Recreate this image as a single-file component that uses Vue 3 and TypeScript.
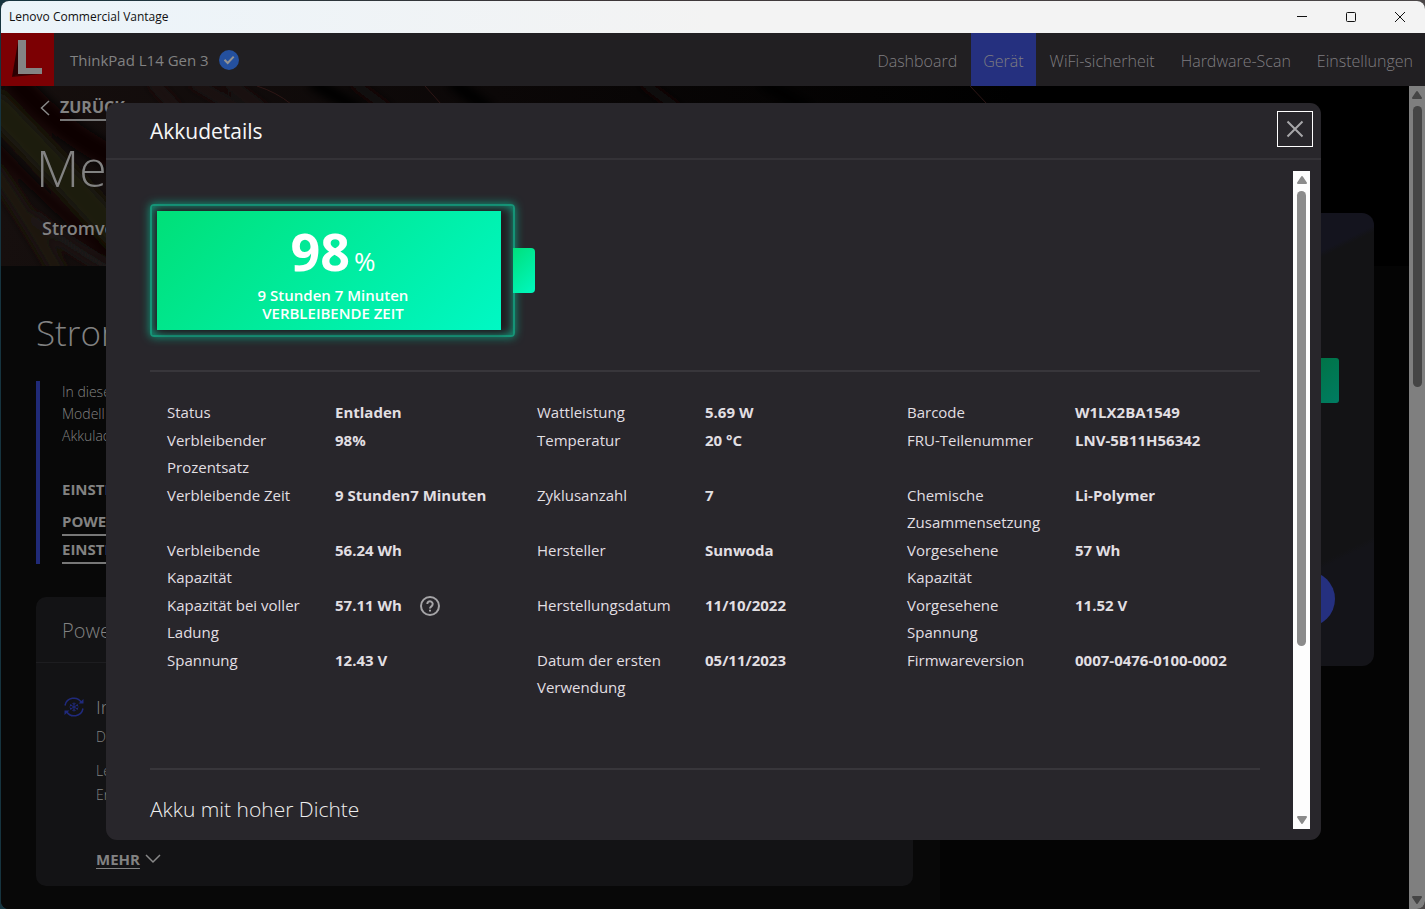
<script setup lang="ts">
interface NavItem {
  label: string
  active?: boolean
}

interface Detail {
  label: string
  value: string
  help?: boolean
}

const nav: NavItem[] = [
  { label: 'Dashboard' },
  { label: 'Gerät', active: true },
  { label: 'WiFi-sicherheit' },
  { label: 'Hardware-Scan' },
  { label: 'Einstellungen' },
]

const details: Detail[] = [
  { label: 'Status', value: 'Entladen' },
  { label: 'Wattleistung', value: '5.69 W' },
  { label: 'Barcode', value: 'W1LX2BA1549' },
  { label: 'Verbleibender Prozentsatz', value: '98%' },
  { label: 'Temperatur', value: '20 °C' },
  { label: 'FRU-Teilenummer', value: 'LNV-5B11H56342' },
  { label: 'Verbleibende Zeit', value: '9 Stunden7 Minuten' },
  { label: 'Zyklusanzahl', value: '7' },
  { label: 'Chemische Zusammensetzung', value: 'Li-Polymer' },
  { label: 'Verbleibende Kapazität', value: '56.24 Wh' },
  { label: 'Hersteller', value: 'Sunwoda' },
  { label: 'Vorgesehene Kapazität', value: '57 Wh' },
  { label: 'Kapazität bei voller Ladung', value: '57.11 Wh', help: true },
  { label: 'Herstellungsdatum', value: '11/10/2022' },
  { label: 'Vorgesehene Spannung', value: '11.52 V' },
  { label: 'Spannung', value: '12.43 V' },
  { label: 'Datum der ersten Verwendung', value: '05/11/2023' },
  { label: 'Firmwareversion', value: '0007-0476-0100-0002' },
]
</script>

<template>
  <div class="desktop">
    <div class="window">
      <div class="titlebar">
        <span class="app-name">Lenovo Commercial Vantage</span>
        <div class="caption">
          <button type="button" aria-label="Minimieren">
            <svg width="12" height="12" viewBox="0 0 12 12"><path d="M1 5.5h10" /></svg>
          </button>
          <button type="button" aria-label="Maximieren">
            <svg width="12" height="12" viewBox="0 0 12 12"><rect x="1.5" y="1.5" width="9" height="9" rx="1" /></svg>
          </button>
          <button type="button" aria-label="Fenster schließen">
            <svg width="12" height="12" viewBox="0 0 12 12"><path d="M1 1l10 10M11 1L1 11" /></svg>
          </button>
        </div>
      </div>

      <header class="topbar">
        <svg class="logo" width="53" height="53" viewBox="0 0 53 53" aria-hidden="true">
          <rect width="53" height="53" fill="#7c0003" />
          <path d="M17 9L11 44l8-3z" fill="#2c0002" />
          <path d="M11 44l8-4h20l1 1z" fill="#3a0002" />
          <path d="M17 7h8v28h16v6H17z" fill="#848484" />
        </svg>
        <span class="device">ThinkPad L14 Gen 3</span>
        <svg class="verified" width="20" height="20" viewBox="0 0 20 20" aria-hidden="true">
          <circle cx="10" cy="10" r="10" fill="#24509e" />
          <path d="M5.5 9.8l3.2 3.2 6-6.4" fill="none" stroke="#929292" stroke-width="2" />
        </svg>
        <nav>
          <a v-for="item in nav" :key="item.label" href="#" :class="{ active: item.active }">{{ item.label }}</a>
        </nav>
      </header>

      <div class="viewport">
        <main class="page">
          <svg class="hero" viewBox="0 0 1408 180" preserveAspectRatio="xMinYMin slice" aria-hidden="true">
            <defs>
              <linearGradient id="fade" x1="0" x2="1" y1="0" y2="0">
                <stop offset="0" stop-color="#160f0e" />
                <stop offset="0.35" stop-color="#0b0707" />
                <stop offset="0.72" stop-color="#000" />
              </linearGradient>
              <filter id="soft"><feGaussianBlur stdDeviation="5" /></filter>
            </defs>
            <rect width="1408" height="180" fill="url(#fade)" />
            <g filter="url(#soft)" fill="none">
              <path d="M-10 15Q50 75 130 165" stroke="#1b1c0d" stroke-width="28" />
              <path d="M10 -10Q60 50 130 80" stroke="#070404" stroke-width="24" />
              <path d="M-10 80Q20 120 60 190" stroke="#1a1211" stroke-width="16" />
              <path d="M-10 55Q40 110 110 170" stroke="#080505" stroke-width="10" />
              <path d="M30 130Q60 155 120 190" stroke="#1f1413" stroke-width="12" />
              <path d="M150 -5l28 30M190 -5l50 30M225 -5l40 30" stroke="#241616" stroke-width="7" />
              <path d="M350 -5l40 30M640 -5l40 30" stroke="#140c0c" stroke-width="8" />
              <path d="M310 -5l50 30M450 -5l40 30M760 -5l50 30" stroke="#040303" stroke-width="14" />
            </g>
            <path d="M256 0Q275 6 290 18M424 0l16 18M969 0l17 18" fill="none" stroke="#2e1716" stroke-width="1" />
          </svg>

          <a class="back" href="#">
            <svg width="10" height="16" viewBox="0 0 10 16" aria-hidden="true"><path d="M9 1L1.500 8 9 15" /></svg>
            <span>ZURÜCK</span>
          </a>
          <h1>Mein Gerät</h1>
          <p class="tab">Stromversorgung</p>

          <div class="columns">
            <section class="left">
              <h2>Stromversorgung</h2>
              <div class="intro">
                <p>In diesem<br />Modell<br />Akkulade</p>
                <strong>EINSTELL</strong>
                <a href="#">POWER</a>
                <a href="#">EINSTELL</a>
              </div>
              <article class="card">
                <h3>Power</h3>
                <div class="feature">
                  <svg width="22" height="20" viewBox="0 0 22 20" aria-hidden="true">
                    <path d="M2 8.500a9 9 0 0 1 16.500-3M20 11.500a9 9 0 0 1-16.500 3" />
                    <path d="M20.500 2v4.500h-5zM1.500 18v-4.500h5z" class="solid" />
                    <path class="flake" d="M11 5.500v9M7 7.700l8 4.600M15 7.700l-8 4.600M9.500 6L11 7.500 12.500 6M9.500 14L11 12.500l1.500 1.500M7 9.500l1-2M14 12.500l1-2M7 10.500l1 2M14 7.500l1 2" />
                  </svg>
                  <div>
                    <h4>Intelligent</h4>
                    <p>Diese</p>
                    <p class="note">Leistung<br />Energie</p>
                  </div>
                </div>
                <button type="button" class="more">
                  <span>MEHR</span>
                  <svg width="16" height="10" viewBox="0 0 16 10" aria-hidden="true"><path d="M1 1l7 7 7-7" /></svg>
                </button>
              </article>
            </section>
            <aside class="status-card">
              <span class="battery-tip"></span>
              <span class="orb"></span>
            </aside>
          </div>
        </main>

        <div class="track outer" aria-hidden="true">
          <svg width="12" height="10" viewBox="0 0 12 10"><path d="M6 2l4 6H2z" /></svg>
          <span class="thumb"></span>
          <svg width="12" height="10" viewBox="0 0 12 10"><path d="M6 8L2 2h8z" /></svg>
        </div>
      </div>

      <section class="modal" role="dialog" aria-labelledby="dialog-title">
        <div class="modal-head">
          <h2 id="dialog-title">Akkudetails</h2>
          <button type="button" class="close" aria-label="Schließen">
            <svg width="18" height="18" viewBox="0 0 18 18"><path d="M1.500 1.500l15 15M16.500 1.500l-15 15" /></svg>
          </button>
        </div>
        <div class="modal-body">
          <div class="scroll-area">
            <div class="battery">
              <div class="shell">
                <div class="charge">
                  <div class="percent"><b>98</b><span>%</span></div>
                  <span>9 Stunden 7 Minuten</span>
                  <span>VERBLEIBENDE ZEIT</span>
                </div>
              </div>
              <div class="terminal"></div>
            </div>

            <dl class="details">
              <div v-for="d in details" :key="d.label" class="detail">
                <dt>{{ d.label }}</dt>
                <dd>
                  {{ d.value }}
                  <button v-if="d.help" type="button" class="help" aria-label="Hilfe">
                    <svg width="20" height="20" viewBox="0 0 20 20">
                      <circle cx="10" cy="10" r="9" />
                      <path d="M7.300 8a2.700 2.700 0 1 1 4.400 2.100c-1 .8-1.700 1.200-1.700 2.400M10 13.800v1.700" />
                    </svg>
                  </button>
                </dd>
              </div>
            </dl>

            <h3 class="density">Akku mit hoher Dichte</h3>
          </div>
          <div class="track inner" aria-hidden="true">
            <svg width="12" height="10" viewBox="0 0 12 10"><path d="M6 2l4 6H2z" /></svg>
            <span class="thumb"></span>
            <svg width="12" height="10" viewBox="0 0 12 10"><path d="M6 8L2 2h8z" /></svg>
          </div>
        </div>
      </section>
    </div>
  </div>
</template>

<style>
html,
body,
#app {
  height: 100%;
}

body {
  overflow: hidden;
}
</style>

<style scoped>
* {
  box-sizing: border-box;
}

h1,
h2,
h3,
h4,
p,
dl,
dd {
  margin: 0;
}

button {
  padding: 0;
  border: 0;
  background: none;
  color: inherit;
  font: inherit;
}

a {
  color: inherit;
  text-decoration: none;
}

svg {
  flex: none;
}

.desktop {
  height: 100%;
  padding: 1px 0 0 1px;
  background: linear-gradient(90deg, #16343f, #3d3638 40%, #4b4748);
  font-family: "Open Sans", "Noto Sans", sans-serif;
}

.window {
  position: relative;
  display: flex;
  flex-direction: column;
  height: 100%;
  overflow: hidden;
  border-radius: 8px;
  background: #080808;
}

.titlebar {
  display: flex;
  flex: none;
  justify-content: space-between;
  height: 32px;
  padding-left: 8px;
  background: linear-gradient(90deg, #ebf4fa, #f3f3f3 50%);
  color: #111;
  font-size: 12px;
  line-height: 32px;
}

.caption {
  display: flex;
  padding-right: 1px;
}

.caption button {
  display: grid;
  place-items: center;
  width: 49px;
}

.caption svg {
  fill: none;
  stroke: #111;
}

.topbar {
  display: flex;
  flex: none;
  align-items: center;
  height: 53px;
  background: #211f22;
  color: #828282;
}

.device {
  margin: 0 10px 0 16px;
  font-size: 15px;
}

.topbar nav {
  display: flex;
  gap: 2px;
  height: 100%;
  margin-left: auto;
}

.topbar nav a {
  padding: 0 12px;
  color: #7f7d80;
  font-size: 16px;
  font-weight: 300;
  line-height: 56px;
}

.topbar nav a.active {
  background: #25307f;
}

.viewport {
  display: flex;
  flex: 1;
  min-height: 0;
}

.page {
  position: relative;
  flex: 1;
  min-width: 0;
  overflow: hidden;
  padding: 9px 35px 0;
  background: linear-gradient(90deg, #080808 939px, #040404 939px);
  color: #828282;
  white-space: nowrap;
}

.hero {
  position: absolute;
  top: 0;
  left: 0;
  width: 100%;
  height: 180px;
}

.back,
.page h1,
.tab,
.columns {
  position: relative;
}

.back {
  display: flex;
  align-items: center;
  gap: 10px;
  width: max-content;
  padding-left: 4px;
  font-size: 16px;
  font-weight: 700;
  line-height: 24px;
}

.back span {
  border-bottom: 2px solid #777;
}

.back svg,
.more svg {
  fill: none;
  stroke: #888;
  stroke-width: 1.5;
}

.page h1 {
  margin-top: 11px;
  font-size: 50px;
  font-weight: 300;
  line-height: 72px;
}

.tab {
  margin-top: 10px;
  padding-left: 6px;
  font-size: 18px;
  font-weight: 600;
  line-height: 28px;
}

.columns {
  display: flex;
  justify-content: space-between;
}

.left {
  width: 877px;
  padding-top: 64px;
}

.left h2 {
  font-size: 35px;
  font-weight: 300;
  line-height: 54px;
}

.intro {
  display: flex;
  flex-direction: column;
  align-items: flex-start;
  margin-top: 21px;
  padding-left: 22px;
  border-left: 4px solid #202a78;
  font-size: 15px;
  line-height: 22px;
}

.intro p {
  margin-bottom: 31px;
  font-size: 14px;
  font-weight: 300;
}

.intro strong,
.intro a {
  font-weight: 700;
}

.intro strong {
  margin-bottom: 8px;
}

.intro a {
  margin-top: 2px;
  padding-bottom: 2px;
  border-bottom: 2px solid #777;
}

.card {
  height: 289px;
  margin-top: 33px;
  border-radius: 10px;
  background: #131315;
}

.card h3 {
  height: 66px;
  padding-left: 26px;
  border-bottom: 1px solid #1d1d20;
  font-size: 20px;
  font-weight: 300;
  line-height: 68px;
}

.feature {
  display: flex;
  gap: 11px;
  padding: 30px 0 0 27px;
}

.feature svg {
  margin-top: 4px;
  fill: none;
  stroke: #202a7c;
  stroke-width: 1.5;
}

.feature .flake {
  stroke-width: 1;
}

.feature .solid {
  fill: #202a7c;
  stroke: none;
}

.feature h4 {
  font-size: 19px;
  font-weight: 300;
  line-height: 28px;
}

.feature p {
  margin-top: 4px;
  font-size: 14px;
  font-weight: 300;
  line-height: 24px;
}

.feature .note {
  margin-top: 10px;
}

.more {
  display: flex;
  align-items: center;
  gap: 5px;
  margin: 41px 0 0 60px;
  font-size: 15px;
  font-weight: 700;
  line-height: 22px;
}

.more span {
  text-decoration: underline;
  text-underline-offset: 3px;
}

.status-card {
  position: relative;
  width: 400px;
  height: 453px;
  margin-top: -29px;
  border-radius: 12px;
  background:
    linear-gradient(154deg, transparent 80%, #141419 81%),
    linear-gradient(-26deg, #131315 67%, #14141e 68%);
}

.battery-tip {
  position: absolute;
  top: 145px;
  right: 35px;
  width: 22px;
  height: 45px;
  border-radius: 3px;
  background: linear-gradient(135deg, #007345, #007c62);
}

.orb {
  position: absolute;
  top: 358px;
  right: 39px;
  width: 56px;
  height: 56px;
  border-radius: 50%;
  background: #25307f;
}

.track {
  display: flex;
  flex: none;
  flex-direction: column;
  align-items: center;
  padding: 4px 0;
}

.track .thumb {
  width: 9px;
  margin-top: 6px;
  border-radius: 5px;
}

.track svg:last-child {
  margin-top: auto;
}

.track path {
  stroke-linejoin: round;
  stroke-width: 2;
}

.outer {
  width: 16px;
  background: #7f7f7f;
  fill: #454545;
  stroke: #454545;
}

.outer .thumb {
  height: 281px;
  background: #454545;
}

.inner {
  width: 17px;
  background: #fdfdfd;
  fill: #8b8b8b;
  stroke: #8b8b8b;
}

.inner .thumb {
  height: 70%;
  background: #8b8b8b;
}

.modal {
  position: absolute;
  top: 102px;
  right: 104px;
  bottom: 69px;
  left: 105px;
  display: flex;
  flex-direction: column;
  overflow: hidden;
  border-radius: 11px;
  background: #28262b;
  color: #e1dfe2;
}

.modal-head {
  display: flex;
  flex: none;
  align-items: flex-start;
  justify-content: space-between;
  height: 57px;
  padding: 8px 8px 0 44px;
  border-bottom: 2px solid #343237;
}

.modal-head h2 {
  color: #f7f7f7;
  font-size: 21px;
  font-weight: 500;
  line-height: 40px;
}

.close {
  display: grid;
  place-items: center;
  width: 36px;
  height: 36px;
  border: 1px solid #fff;
}

.close svg {
  fill: none;
  stroke: #a7a6a9;
  stroke-width: 2;
}

.modal-body {
  display: flex;
  flex: 1;
  gap: 33px;
  min-height: 0;
  padding: 11px 11px 11px 44px;
}

.scroll-area {
  flex: 1;
  min-width: 0;
  overflow: hidden;
  margin: 0 0 0 -20px;
  padding: 33px 0 0 20px;
}

.battery {
  display: flex;
  align-items: center;
  color: #fff;
}

.shell {
  width: 365px;
  height: 133px;
  padding: 5px;
  border: 2px solid #169578;
  border-radius: 4px;
  box-shadow: 0 0 10px #10a080, inset 0 0 10px #10a080;
}

.charge {
  display: flex;
  flex-direction: column;
  align-items: center;
  width: 98%;
  height: 100%;
  padding: 12px 0 0 8px;
  background: linear-gradient(135deg, #00e078, #00f8c4);
  box-shadow: 3px 1px 8px #1b1a1d;
  font-size: 15px;
  font-weight: 600;
  line-height: 18px;
}

.percent {
  display: flex;
  align-items: baseline;
  gap: 4px;
  margin-bottom: 7px;
  font-size: 26px;
  font-weight: 500;
  line-height: 32px;
}

.percent b {
  font-size: 52px;
  font-weight: 700;
  line-height: 56px;
}

.terminal {
  width: 22px;
  height: 45px;
  margin-left: -2px;
  border-radius: 0 4px 4px 0;
  background: linear-gradient(135deg, #00e07c, #00f8c0);
  z-index: 1;
}

.details {
  display: grid;
  grid-template-columns: repeat(3, 1fr);
  row-gap: 1px;
  margin-top: 33px;
  padding: 27px 0 67px;
  border-top: 2px solid #38363b;
  border-bottom: 2px solid #38363b;
  font-size: 15px;
  line-height: 27px;
}

.detail {
  display: grid;
  grid-template-columns: 168px 1fr;
  padding-left: 17px;
}

dt {
  padding-right: 32px;
}

dd {
  display: flex;
  align-items: flex-start;
  gap: 18px;
  font-weight: 700;
  white-space: nowrap;
}

.help {
  display: flex;
  height: 27px;
  align-items: center;
}

.help svg {
  fill: none;
  stroke: #a5a4a7;
  stroke-width: 2;
}

.density {
  margin-top: 22px;
  color: #efefef;
  font-size: 21px;
  font-weight: 300;
  line-height: 34px;
}
</style>
